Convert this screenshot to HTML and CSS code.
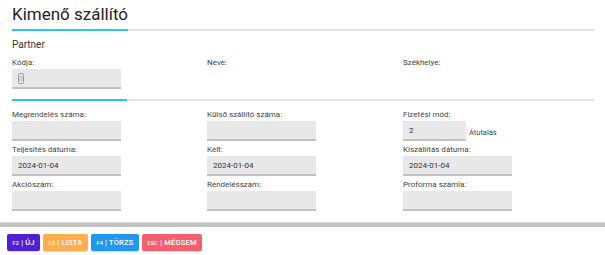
FILE: index.html
```html
<!DOCTYPE html>
<html lang="hu">
<head>
    <meta charset="utf-8">
    <title>Kimenő szállító</title>
    <link rel="stylesheet" href="styles.css">
</head>
<body>
<div class="page">
    <div class="title-bar">
        <h1 class="title">Kimenő szállító</h1>
    </div>

    <h2 class="section-title">Partner</h2>
    <div class="grid">
        <div class="field">
            <label>Kódja:</label>
            <div class="input">
                <svg class="code-icon" width="6" height="11" viewBox="0 0 6 11">
                    <rect x="0.5" y="0.5" width="5" height="10" rx="1" fill="none" stroke="#9a9a9a"/>
                    <rect x="2" y="3" width="2" height="5" rx="1" fill="none" stroke="#b0b0b0" stroke-width="0.8"/>
                </svg>
            </div>
        </div>
        <div class="field">
            <label>Neve:</label>
        </div>
        <div class="field">
            <label>Székhelye:</label>
        </div>
    </div>

    <div class="divider"><span class="divider-accent"></span></div>

    <div class="grid rows">
        <div class="field">
            <label>Megrendelés száma:</label>
            <div class="input"></div>
        </div>
        <div class="field">
            <label>Külső szállító száma:</label>
            <div class="input"></div>
        </div>
        <div class="field">
            <label>Fizetési mód:</label>
            <div class="inline">
                <div class="input short">2</div>
                <span class="hint">Átutalás</span>
            </div>
        </div>

        <div class="field">
            <label>Teljesítés dátuma:</label>
            <div class="input">2024-01-04</div>
        </div>
        <div class="field">
            <label>Kelt:</label>
            <div class="input">2024-01-04</div>
        </div>
        <div class="field">
            <label>Kiszállítás dátuma:</label>
            <div class="input">2024-01-04</div>
        </div>

        <div class="field">
            <label>Akciószám:</label>
            <div class="input"></div>
        </div>
        <div class="field">
            <label>Rendelésszám:</label>
            <div class="input"></div>
        </div>
        <div class="field">
            <label>Proforma számla:</label>
            <div class="input"></div>
        </div>
    </div>
</div>

<div class="toolbar">
    <button class="btn btn-new"><span class="key">F2</span> | ÚJ</button>
    <button class="btn btn-list"><span class="key">F3</span> | LISTA</button>
    <button class="btn btn-master"><span class="key">F4</span> | TÖRZS</button>
    <button class="btn btn-cancel"><span class="key">ESC</span> | MÉGSEM</button>
</div>
</body>
</html>
```

FILE: styles.css
```css
body {
    margin: 0;
    font-family: Roboto, "Liberation Sans", Arial, sans-serif;
    background-color: white;
    color: #333;
}

.page {
    padding: 4px 11px 0 12px;
}

.title-bar {
    border-bottom: 2px solid #e2e2e2;
}

.title {
    display: inline-block;
    margin: 0 0 -2px 0;
    padding-bottom: 4px;
    font-size: 17px;
    line-height: 21px;
    font-weight: 400;
    color: #222;
    border-bottom: 2px solid #2cc5e3;
}

.section-title {
    margin: 8px 0 6px 0;
    font-size: 10px;
    line-height: 12px;
    font-weight: 400;
    color: #333;
}

.grid {
    display: grid;
    grid-template-columns: 195px 196px 1fr;
    row-gap: 3px;
}

.rows {
    padding-top: 8px;
}

.field label {
    display: block;
    font-size: 8px;
    line-height: 12px;
    color: #444;
}

.input {
    box-sizing: border-box;
    width: 109px;
    height: 20px;
    padding: 0 6px;
    display: flex;
    align-items: center;
    background-color: #e8e8e8;
    border-bottom: 2px solid #c2c2c2;
    font-size: 8px;
    color: #333;
}

.input.short {
    width: 63px;
}

.inline {
    display: flex;
    align-items: center;
    gap: 3px;
}

.hint {
    font-size: 7.5px;
    color: #444;
    padding-top: 2px;
}

.code-icon {
    display: block;
}

.divider {
    margin-top: 10px;
    height: 2px;
    background-color: #e4e4e4;
}

.divider-accent {
    display: block;
    width: 115px;
    height: 2px;
    background-color: #2cc5e3;
}

.toolbar {
    margin-top: 12px;
    border-top: 4px solid #c2c2c2;
    box-shadow: 0 -1px 1px #dedede;
    padding: 7px 7px;
    display: flex;
    gap: 3px;
}

.btn {
    height: 17px;
    padding: 0 5.5px;
    border: none;
    border-radius: 2px;
    color: white;
    font-family: Roboto, "Liberation Sans", Arial, sans-serif;
    font-size: 7.5px;
    font-weight: 500;
    letter-spacing: 0.2px;
    display: inline-flex;
    align-items: center;
    white-space: pre;
    box-shadow: 0 1px 1px rgba(0, 0, 0, 0.15);
}

.key {
    font-size: 5.5px;
}

.btn-new {
    background-color: #4f1fd4;
}

.btn-list {
    background-color: #ffad4d;
}

.btn-master {
    background-color: #2297f1;
}

.btn-cancel {
    background-color: #f5606e;
}
```
